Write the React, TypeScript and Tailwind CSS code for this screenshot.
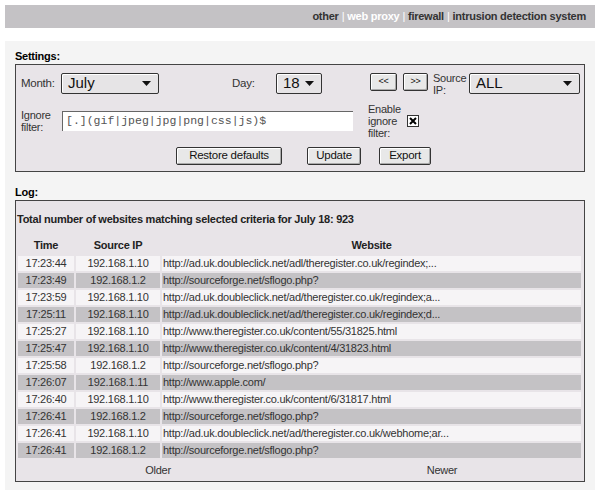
import React from 'react';

const rows = [
  { time: '17:23:44', ip: '192.168.1.10', url: 'http://ad.uk.doubleclick.net/adl/theregister.co.uk/regindex;...' },
  { time: '17:23:49', ip: '192.168.1.2', url: 'http://sourceforge.net/sflogo.php?' },
  { time: '17:23:59', ip: '192.168.1.10', url: 'http://ad.uk.doubleclick.net/ad/theregister.co.uk/regindex;a...' },
  { time: '17:25:11', ip: '192.168.1.10', url: 'http://ad.uk.doubleclick.net/ad/theregister.co.uk/regindex;d...' },
  { time: '17:25:27', ip: '192.168.1.10', url: 'http://www.theregister.co.uk/content/55/31825.html' },
  { time: '17:25:47', ip: '192.168.1.10', url: 'http://www.theregister.co.uk/content/4/31823.html' },
  { time: '17:25:58', ip: '192.168.1.2', url: 'http://sourceforge.net/sflogo.php?' },
  { time: '17:26:07', ip: '192.168.1.11', url: 'http://www.apple.com/' },
  { time: '17:26:40', ip: '192.168.1.10', url: 'http://www.theregister.co.uk/content/6/31817.html' },
  { time: '17:26:41', ip: '192.168.1.2', url: 'http://sourceforge.net/sflogo.php?' },
  { time: '17:26:41', ip: '192.168.1.10', url: 'http://ad.uk.doubleclick.net/ad/theregister.co.uk/webhome;ar...' },
  { time: '17:26:41', ip: '192.168.1.2', url: 'http://sourceforge.net/sflogo.php?' },
];

function Select({ value, className }: { value: string; className: string }) {
  return (
    <div
      className={`flex h-[21px] items-center justify-between rounded-[2px] border border-[#333] bg-[#e6e4e6] pl-[6px] pr-[7px] text-[15px] tracking-normal text-[#111] shadow-[inset_1px_1px_0_#fff] ${className}`}
    >
      <span>{value}</span>
      <svg width="9" height="5" viewBox="0 0 9 5">
        <path d="M0 0h9L4.5 5z" fill="#111" />
      </svg>
    </div>
  );
}

function Button({ label, className }: { label: string; className: string }) {
  return (
    <div
      className={`flex h-[18px] items-center justify-center rounded-[2px] border border-[#333] bg-[#e8e8e8] text-[#111] shadow-[inset_1px_1px_0_#fff,inset_-1px_-1px_0_#aaa] ${className}`}
    >
      {label}
    </div>
  );
}

export default function App() {
  return (
    <div
      className="min-h-[490px] bg-white pt-[5px] text-[11px] tracking-[-0.25px] text-[#333]"
      style={{ fontFamily: '"Liberation Sans", Arial, sans-serif' }}
    >
      <div className="mx-[5px] flex h-[23px] items-center justify-end bg-[#c4c2c5] pr-[9px] text-[11px] font-bold text-[#333]">
        <span>other</span>
        <span className="mx-[3px] font-normal text-white">|</span>
        <span className="text-white">web proxy</span>
        <span className="mx-[3px] font-normal text-white">|</span>
        <span>firewall</span>
        <span className="mx-[3px] font-normal text-white">|</span>
        <span>intrusion detection system</span>
      </div>

      <div className="mx-[5px] mt-[13px] h-[449px] bg-[#f4f4f4] px-[10px] pt-[9px]">
        <div className="h-[13px] leading-[13px] font-bold text-black">Settings:</div>

        <div className="mt-[1px] h-[108px] border border-[#444] bg-[#e8e4e8] pl-[5px] pt-[8px] text-[11.5px]">
          <div className="flex h-[21px] items-center">
            <span className="w-[40px]">Month:</span>
            <Select value="July" className="w-[98px]" />
            <span className="ml-[73px] w-[44px]">Day:</span>
            <Select value="18" className="w-[46px]" />
            <Button label="<<" className="mb-[3px] ml-[48px] w-[27px] text-[9px]" />
            <Button label=">>" className="mb-[3px] ml-[6px] w-[25px] text-[9px]" />
            <span className="ml-[5px] w-[36px] text-[11px] leading-[12px]">
              Source
              <br />
              IP:
            </span>
            <Select value="ALL" className="w-[111px]" />
          </div>

          <div className="mt-[9px] flex h-[35px] items-center">
            <span className="w-[41px] text-[11px] leading-[12px]">
              Ignore
              <br />
              filter:
            </span>
            <div
              className="flex h-[20px] w-[291px] items-center border-t border-l border-[#666] bg-white pl-[3px] text-[11.5px] tracking-normal text-[#555]"
              style={{ fontFamily: '"Liberation Mono", "Courier New", monospace' }}
            >
              [.](gif|jpeg|jpg|png|css|js)$
            </div>
            <span className="ml-[15px] w-[39px] text-[11px] leading-[12px]">
              Enable
              <br />
              ignore
              <br />
              filter:
            </span>
            <div className="flex h-[12px] w-[12px] items-center justify-center border border-[#333] bg-white">
              <svg width="8" height="8" viewBox="0 0 8 8">
                <path d="M1 1l6 6M7 1L1 7" stroke="#000" strokeWidth="2" />
              </svg>
            </div>
          </div>

          <div className="mt-[9px] flex">
            <Button label="Restore defaults" className="ml-[155px] w-[106px]" />
            <Button label="Update" className="ml-[25px] w-[54px]" />
            <Button label="Export" className="ml-[18px] w-[52px]" />
          </div>
        </div>

        <div className="mt-[14px] h-[13px] leading-[13px] font-bold text-black">Log:</div>

        <div className="mt-[1px] h-[282px] border border-[#444] bg-[#e8e4e8]">
          <div className="mt-[10px] pl-[1px] font-bold text-[#222]">
            Total number of websites matching selected criteria for July 18: 923
          </div>
          <table className="mt-[7px] border-separate border-spacing-[2px]">
            <thead>
              <tr className="h-[17px] font-bold text-[#222]">
                <th className="w-[56px] p-0 text-center font-bold">Time</th>
                <th className="w-[84px] p-0 text-center font-bold">Source IP</th>
                <th className="w-[419px] p-0 text-center font-bold">Website</th>
              </tr>
            </thead>
            <tbody>
              {rows.map((r, i) => (
                <tr key={i} className={`h-[15px] ${i % 2 === 0 ? 'bg-[#f6f4f6]' : 'bg-[#c4c2c5]'}`}>
                  <td className="p-0 text-center leading-[15px]">{r.time}</td>
                  <td className="p-0 text-center leading-[15px]">{r.ip}</td>
                  <td className="p-0 pl-[1px] leading-[15px]">{r.url}</td>
                </tr>
              ))}
            </tbody>
          </table>
          <div className="mt-[2px] flex">
            <span className="w-1/2 text-center">Older</span>
            <span className="w-1/2 text-center">Newer</span>
          </div>
        </div>
      </div>
    </div>
  );
}
